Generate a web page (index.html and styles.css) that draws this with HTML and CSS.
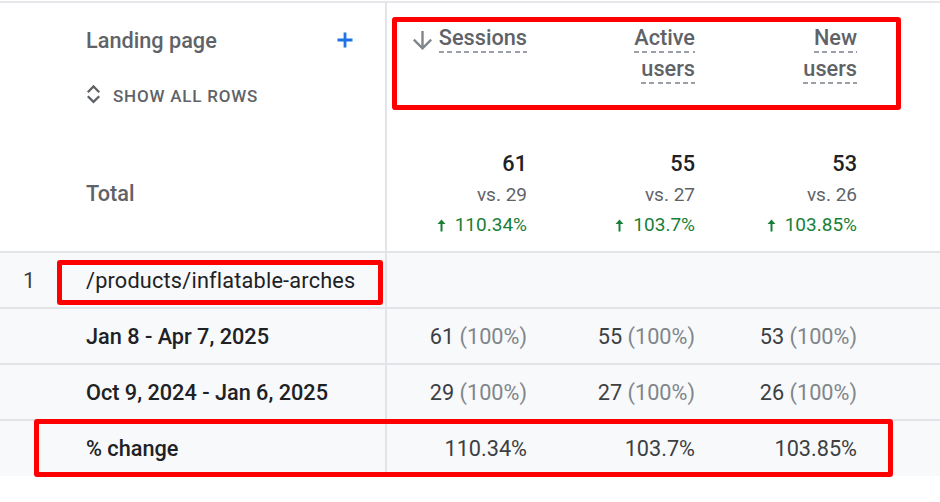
FILE: index.html
```html
<!DOCTYPE html>
<html lang="en">
<head>
<meta charset="utf-8">
<title>Landing page report</title>
<link rel="stylesheet" href="styles.css">
</head>
<body>
<div class="report">
  <div class="top-rule"></div>

  <div class="row head">
    <div class="cell rank"></div>
    <div class="cell dim">
      <div class="dim-title">
        <span>Landing page</span>
        <svg class="plus" width="18" height="18" viewBox="0 0 18 18"><path d="M9 1.5v15M1.5 9h15" stroke="#1a73e8" stroke-width="2.8" fill="none"/></svg>
      </div>
      <div class="show-all">
        <svg class="unfold" width="15" height="22" viewBox="0 0 15 22"><path d="M1.8 9.2 7.5 3.5l5.7 5.7M1.8 13.2l5.7 5.7 5.7-5.7" stroke="#5f6368" stroke-width="2.3" fill="none"/></svg>
        <span>SHOW ALL ROWS</span>
      </div>
    </div>
    <div class="cell mh">
      <svg class="sort" width="19" height="19" viewBox="4 4 16 16"><path d="M20 12l-1.41-1.41L13 16.17V4h-2v12.17l-5.58-5.59L4 12l8 8 8-8z" fill="#80868b"/></svg>
      <span class="lbl"><span class="u">Sessions</span></span>
    </div>
    <div class="cell mh"><span class="lbl"><span class="u">Active users</span></span></div>
    <div class="cell mh"><span class="lbl"><span class="u">New users</span></span></div>
    <div class="cell"></div>
  </div>

  <div class="row total">
    <div class="cell rank"></div>
    <div class="cell dim"><span class="total-label">Total</span></div>
    <div class="cell num tot"><div class="big">61</div><div class="vs">vs. 29</div><div class="up"><svg class="uparr" width="9" height="13" viewBox="0 0 9 13"><path d="M4.5 0.5 0.5 5h3v7.5h2V5h3z" fill="#188038"/></svg>110.34%</div></div>
    <div class="cell num tot"><div class="big">55</div><div class="vs">vs. 27</div><div class="up"><svg class="uparr" width="9" height="13" viewBox="0 0 9 13"><path d="M4.5 0.5 0.5 5h3v7.5h2V5h3z" fill="#188038"/></svg>103.7%</div></div>
    <div class="cell num tot"><div class="big">53</div><div class="vs">vs. 26</div><div class="up"><svg class="uparr" width="9" height="13" viewBox="0 0 9 13"><path d="M4.5 0.5 0.5 5h3v7.5h2V5h3z" fill="#188038"/></svg>103.85%</div></div>
    <div class="cell"></div>
  </div>

  <div class="row data">
    <div class="cell rank">1</div>
    <div class="cell dim"><span class="page">/products/inflatable-arches</span></div>
    <div class="cell num"></div>
    <div class="cell num"></div>
    <div class="cell num"></div>
    <div class="cell"></div>
  </div>

  <div class="row data">
    <div class="cell rank"></div>
    <div class="cell dim"><span class="strong">Jan 8 - Apr 7, 2025</span></div>
    <div class="cell num">61 <span class="pct">(100%)</span></div>
    <div class="cell num">55 <span class="pct">(100%)</span></div>
    <div class="cell num">53 <span class="pct">(100%)</span></div>
    <div class="cell"></div>
  </div>

  <div class="row data">
    <div class="cell rank"></div>
    <div class="cell dim"><span class="strong">Oct 9, 2024 - Jan 6, 2025</span></div>
    <div class="cell num">29 <span class="pct">(100%)</span></div>
    <div class="cell num">27 <span class="pct">(100%)</span></div>
    <div class="cell num">26 <span class="pct">(100%)</span></div>
    <div class="cell"></div>
  </div>

  <div class="row data last">
    <div class="cell rank"></div>
    <div class="cell dim"><span class="strong">% change</span></div>
    <div class="cell num">110.34%</div>
    <div class="cell num">103.7%</div>
    <div class="cell num">103.85%</div>
    <div class="cell"></div>
  </div>

  <div class="mark mark-head"></div>
  <div class="mark mark-page"></div>
  <div class="mark mark-change"></div>
</div>
</body>
</html>
```

FILE: styles.css
```css
html, body {
  margin: 0;
  padding: 0;
  background: #ffffff;
}

body {
  font-family: Roboto, "Noto Sans", "Liberation Sans", sans-serif;
  font-size: 21.7px;
  color: #3c4043;
}

.report {
  position: relative;
  width: 940px;
  height: 502px;
  padding-top: 1px;
  box-sizing: border-box;
  overflow: hidden;
}

.top-rule {
  height: 2px;
  background: #e6e7ea;
}

.row {
  display: grid;
  grid-template-columns: 58px 329px 140px 168px 162px 1fr;
  box-sizing: border-box;
}

.cell {
  box-sizing: border-box;
  min-width: 0;
}

.dim {
  border-right: 2px solid #e3e4e7;
  padding-left: 28px;
}

/* header */
.head {
  height: 132px;
}

.head .dim {
  padding-top: 22px;
  padding-right: 31px;
  display: flex;
  flex-direction: column;
  gap: 26px;
}

.dim-title {
  display: flex;
  justify-content: space-between;
  align-items: center;
  height: 30px;
  font-weight: 500;
  color: #5f6368;
}

.show-all {
  display: flex;
  align-items: center;
  gap: 12px;
  height: 30px;
  font-size: 17px;
  font-weight: 500;
  letter-spacing: 0.8px;
  color: #5f6368;
}

.unfold {
  margin-top: -4px;
}

.mh {
  display: flex;
  justify-content: flex-end;
  align-items: flex-start;
  padding-top: 19px;
  font-weight: 500;
  color: #5f6368;
  line-height: 31px;
}

.sort {
  margin-top: 9px;
  margin-right: 7px;
}

.lbl {
  display: inline-block;
  width: min-content;
  text-align: right;
}

.u {
  padding-bottom: 3px;
  background-image: repeating-linear-gradient(90deg, #9aa0a6 0 5px, transparent 5px 8.4px);
  background-size: 100% 2px;
  background-position: left bottom;
  background-repeat: no-repeat;
  -webkit-box-decoration-break: clone;
  box-decoration-break: clone;
}

/* total */
.total {
  height: 118px;
  border-bottom: 2px solid #e3e4e7;
}

.total .dim,
.total .rank {
  display: flex;
  align-items: center;
}

.total-label {
  font-weight: 500;
  color: #5f6368;
}

.num {
  text-align: right;
}

.tot {
  padding-top: 14px;
  line-height: 30.5px;
}

.big {
  font-weight: 500;
  color: #202124;
}

.vs {
  font-size: 19px;
  color: #5f6368;
}

.up {
  font-size: 19px;
  color: #188038;
}

.uparr {
  margin-right: 9px;
  vertical-align: -1px;
}

/* data rows */
.data {
  height: 56px;
  background: #f8f9fa;
  border-bottom: 2px solid #e3e4e7;
}

.data.last {
  border-bottom: none;
  height: 55px;
}

.data .cell {
  display: flex;
  align-items: center;
}

.data .num {
  justify-content: flex-end;
  white-space: pre;
}

.rank {
  justify-content: center;
  color: #3c4043;
}

.page {
  color: #202124;
  letter-spacing: 0.2px;
}

.strong {
  font-weight: 500;
  color: #202124;
}

.pct {
  color: #80868b;
}

/* highlight boxes drawn over the table */
.mark {
  position: absolute;
  box-sizing: border-box;
  border: 5px solid #ff0000;
  border-radius: 3px;
  pointer-events: none;
}

.mark-head {
  left: 392px;
  top: 17px;
  width: 509px;
  height: 93px;
}

.mark-page {
  left: 57px;
  top: 260px;
  width: 326px;
  height: 45px;
}

.mark-change {
  left: 34px;
  top: 419px;
  width: 859px;
  height: 58px;
}
```
